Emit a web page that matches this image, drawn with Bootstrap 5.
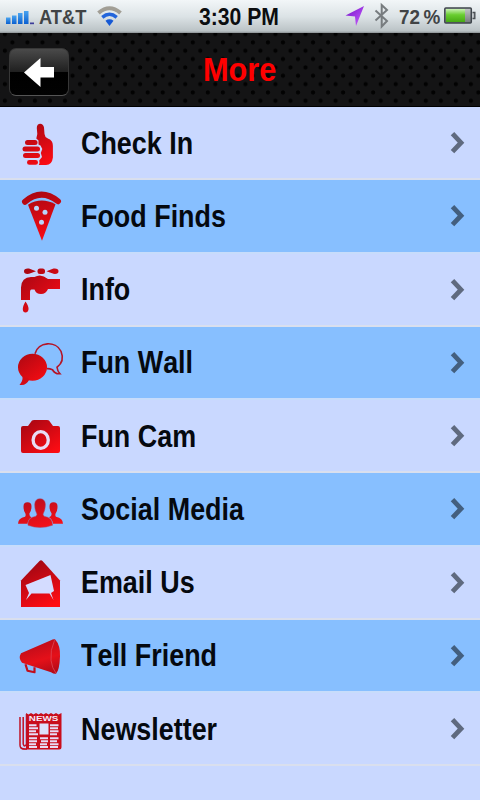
<!DOCTYPE html>
<html lang="en">
<head>
<meta charset="utf-8">
<meta name="viewport" content="width=device-width, initial-scale=1">
<title>More</title>
<link href="https://cdn.jsdelivr.net/npm/bootstrap@5.3.0/dist/css/bootstrap.min.css" rel="stylesheet">
<style>
body{font-family:"Liberation Sans",Arial,sans-serif;background:#c9d8ff;height:800px;overflow:hidden;color:#05090f}
svg{display:block;flex:none}
.statusbar{height:33px;background:linear-gradient(#f2f6f8,#dce3e6 50%,#bbc3c6 94%,#8b9194);font-weight:700;color:#414446;position:relative}
.status-label{transform-origin:0 0;white-space:nowrap;line-height:24px;font-size:21px}
.carrier{position:absolute;left:39px;top:5px;transform:scaleX(.87)}
.clock{position:absolute;left:199px;top:5px;font-size:23px;transform:scaleX(.92);color:#0b0d0f}
.charge{position:absolute;left:399px;top:5px;transform:scaleX(.9)}
.titlebar{height:74px;background-color:#141415;border-bottom:1px solid #000;
background-image:radial-gradient(circle,#020202 1.7px,transparent 2.5px),radial-gradient(circle,#020202 1.7px,transparent 2.5px);
background-size:15.04px 16.7px;background-position:4.9px 1px,12.4px -7.3px}
.back-btn{width:60px;height:48px;margin-left:9px;margin-top:4px;border-radius:7px;background:linear-gradient(#4a4a4a,#202020 49%,#000 51%,#020202);border:1px solid #373737;border-bottom-color:#555;padding:0}
.page-title{position:absolute;left:203px;top:17px;font-size:32.5px;line-height:40px;color:#ff0000;transform:scaleX(.945);transform-origin:0 0}
.menu-row{height:73.25px;background:#c9d8ff;border-bottom:2px solid #d9dfee;text-decoration:none;color:#05090f}
.menu-row:nth-child(even){background:#87bfff;border-bottom-color:#c7dcfb}
.menu-label{font-size:30.5px;font-weight:700;line-height:40px;transform:scaleX(.882);transform-origin:0 0;margin-left:11px;white-space:nowrap;font-kerning:none}
.chev{opacity:.57}
</style>
<script src="https://cdn.jsdelivr.net/npm/bootstrap@5.3.0/dist/js/bootstrap.bundle.min.js"></script>
</head>
<body>
<header>
<div class="statusbar">
<svg width="480" height="33" viewBox="0 0 480 33">
<defs>
<linearGradient id="sig" x1="0" y1="0" x2="0" y2="1"><stop stop-color="#49a4f0"/><stop offset="1" stop-color="#0a5fd0"/></linearGradient>
<linearGradient id="bat" x1="0" y1="0" x2="0" y2="1"><stop stop-color="#c9f2b4"/><stop offset=".45" stop-color="#69cd30"/><stop offset="1" stop-color="#46a913"/></linearGradient>
<linearGradient id="shell" x1="0" y1="0" x2="0" y2="1"><stop stop-color="#c4c7c9"/><stop offset="1" stop-color="#75797c"/></linearGradient>
<linearGradient id="loc" x1="0" y1="0" x2="1" y2="1"><stop stop-color="#7211c8"/><stop offset="1" stop-color="#cb60ff"/></linearGradient>
</defs>
<g fill="url(#sig)"><rect x="6" y="17.500" width="4.500" height="6.500"/><rect x="12" y="15.500" width="4.500" height="8.500"/><rect x="18" y="13" width="4.500" height="11"/><rect x="24" y="11" width="4.500" height="13"/></g><rect x="30" y="22.500" width="4" height="1.700" fill="#3c3c9a"/>
<g fill="none"><path d="M98.500 13Q109.500 3.500 120.500 13" stroke="#a19e95" stroke-width="4"/><path d="M102.300 17.300Q109.500 11.300 116.700 17.300" stroke="#2365db" stroke-width="3.500"/></g><path d="M105.500 20.700Q109.500 17.800 113.500 20.700L109.500 26Z" fill="#1659d4"/>
<path d="M364 6L345.500 15.500L355 16.500L356 26Z" fill="url(#loc)"/>
<path d="M375.500 10.500L387 21L381.700 26.500V5L387 10L375.500 20.500" fill="none" stroke="#777c7f" stroke-width="2"/>
<rect x="444.800" y="8" width="26.500" height="15" rx="1" fill="url(#shell)" stroke="#3e454b" stroke-width="1.500"/><rect x="446" y="9" width="19" height="13" fill="url(#bat)"/><path d="M472.500 12.500H474.800V18.500H472.500" fill="#b4b8bc" stroke="#4b5054" stroke-width="1.400"/>
</svg>
<span class="status-label carrier">AT&amp;T</span><span class="status-label clock">3:30 PM</span><span class="status-label charge">72<span class="ms-1">%</span></span>
</div>
<div class="titlebar position-relative d-flex align-items-center">
<button class="btn back-btn" aria-label="Back"><svg width="58" height="46" viewBox="10 49 58 46"><path d="M24 72.500L40.500 58V67H54V77.500H40.500V87Z" fill="#fff"/></svg></button>
<h1 class="page-title fw-bold m-0">More</h1>
</div>
</header>
<nav class="d-flex flex-column">
<a class="menu-row d-flex align-items-center" href="#"><svg width="70" height="71" viewBox="0 107 70 71"><defs><linearGradient id="red" gradientUnits="userSpaceOnUse" x1="24" y1="124" x2="48" y2="166"><stop stop-color="#a50713"/><stop offset="1" stop-color="#ff0c13"/></linearGradient></defs><g fill="url(#red)"><path d="M36.800 128C36.500 122.300 43.500 122.300 44 127.500L44.500 134Q44.800 137 47.500 138.300C51.500 140 52.900 142 52.900 146V157.500Q52 165 46 165H38.800Q40 163 39.200 160.500L42 157L40.800 153L42.300 149L40.500 145.500L38.500 144.500V140.500L36.300 138.500Q38 134 36.800 128Z"/><rect x="25" y="140" width="12.500" height="5" rx="2.500"/><rect x="22.500" y="146.500" width="17.500" height="5" rx="2.500"/><rect x="23" y="153" width="17" height="5" rx="2.500"/><rect x="27" y="160" width="11" height="4.800" rx="2.400"/></g></svg><span class="menu-label">Check In</span><svg class="chev ms-auto" width="30" height="71" viewBox="450 107 30 71"><path d="M452.500 133.700L461 142.700L452.500 151.700" fill="none" stroke="#101820" stroke-width="4.800"/></svg></a>
<a class="menu-row d-flex align-items-center" href="#"><svg width="70" height="71" viewBox="0 180.250 70 71"><defs><linearGradient id="red2" gradientUnits="userSpaceOnUse" x1="30" y1="192" x2="42" y2="240"><stop stop-color="#a90712"/><stop offset="1" stop-color="#f80b13"/></linearGradient></defs><path d="M25 202Q41 188 58 201.500" fill="none" stroke="url(#red2)" stroke-width="6" stroke-linecap="round"/><path d="M28 205Q41 197 55.500 204.500L42 241Z" fill="url(#red2)"/><g fill="#b9d4fa"><circle cx="36.500" cy="208.500" r="2.500"/><circle cx="45" cy="212.500" r="2.500"/><circle cx="41.500" cy="222.500" r="2.500"/></g></svg><span class="menu-label">Food Finds</span><svg class="chev ms-auto" width="30" height="71" viewBox="450 107 30 71"><path d="M452.500 133.700L461 142.700L452.500 151.700" fill="none" stroke="#101820" stroke-width="4.800"/></svg></a>
<a class="menu-row d-flex align-items-center" href="#"><svg width="70" height="71" viewBox="0 253.500 70 71"><defs><linearGradient id="red3" gradientUnits="userSpaceOnUse" x1="22" y1="270" x2="55" y2="304"><stop stop-color="#a50713"/><stop offset="1" stop-color="#f00b15"/></linearGradient></defs><g fill="url(#red3)"><path d="M21 299.500V287Q21.500 276.500 31 276.500H34.500Q41 272.500 48 278.500H60V288.500H48Q46 293.500 41 293.500T34.500 289H31.500Q30 289 30 292V299.500Z"/><rect x="37.500" y="268" width="7.500" height="5.400" rx="2.500"/><path d="M36 270.700L29 268Q24 267.500 24 270.700T29 273.300ZM46.500 270.700L53.500 268Q58.500 267.500 58.500 270.700T53.500 273.300Z"/><path d="M25.500 301Q29 306 28.500 309Q28 312 25.500 312T22.800 309Q22.500 306 25.500 301Z"/></g></svg><span class="menu-label">Info</span><svg class="chev ms-auto" width="30" height="71" viewBox="450 107 30 71"><path d="M452.500 133.700L461 142.700L452.500 151.700" fill="none" stroke="#101820" stroke-width="4.800"/></svg></a>
<a class="menu-row d-flex align-items-center" href="#"><svg width="70" height="71" viewBox="0 326.750 70 71"><defs><linearGradient id="red4" gradientUnits="userSpaceOnUse" x1="20" y1="346" x2="47" y2="382"><stop stop-color="#a30812"/><stop offset="1" stop-color="#fc0c13"/></linearGradient></defs><path d="M35 353.500C38 341 56 340.500 61 351Q65 361 57 367Q57.500 371 60 373.500Q55 374 52.500 369.500Q49 368 46.500 368.500" fill="none" stroke="#b51426" stroke-width="1.600"/><ellipse cx="32.500" cy="367" rx="14.500" ry="13.500" fill="url(#red4)"/><path d="M22.500 376Q23 381 19.500 384.500Q26 386 29.500 379Z" fill="#d40b15"/></svg><span class="menu-label">Fun Wall</span><svg class="chev ms-auto" width="30" height="71" viewBox="450 107 30 71"><path d="M452.500 133.700L461 142.700L452.500 151.700" fill="none" stroke="#101820" stroke-width="4.800"/></svg></a>
<a class="menu-row d-flex align-items-center" href="#"><svg width="70" height="71" viewBox="0 400 70 71"><defs><linearGradient id="red5" gradientUnits="userSpaceOnUse" x1="27" y1="420" x2="52" y2="455"><stop stop-color="#a80713"/><stop offset="1" stop-color="#fd0c13"/></linearGradient></defs><path d="M23 426H28L32 420.500Q33 420 34 420H47Q48.500 420 49 420.500L53 426H58Q60 426 60 428V451Q60 453 58 453H23Q21 453 21 451V428Q21 426 23 426Z" fill="url(#red5)"/><ellipse cx="40.700" cy="440" rx="7.600" ry="8.400" fill="none" stroke="#e8dcf4" stroke-width="3.300"/></svg><span class="menu-label">Fun Cam</span><svg class="chev ms-auto" width="30" height="71" viewBox="450 107 30 71"><path d="M452.500 133.700L461 142.700L452.500 151.700" fill="none" stroke="#101820" stroke-width="4.800"/></svg></a>
<a class="menu-row d-flex align-items-center" href="#"><svg width="70" height="71" viewBox="0 473.250 70 71"><defs><linearGradient id="red6" gradientUnits="userSpaceOnUse" x1="35" y1="499" x2="43" y2="528"><stop stop-color="#bd0d1c"/><stop offset="1" stop-color="#f51119"/></linearGradient></defs><g fill="url(#red6)"><path d="M18 524Q18 518.500 25 517Q26 516 25.500 514Q23.500 512 23.500 506.500Q23.500 502.500 27.500 502.500T31.500 506.500Q31.500 511 29.500 513.500Q29 517 31.500 517.500Q28 519.500 27.500 524Z"/><path d="M63 524Q63 518.500 56 517Q55 516 55.500 514Q57.500 512 57.500 506.500Q57.500 502.500 53.500 502.500T49.500 506.500Q49.500 511 51.500 513.500Q52 517 49 517.500Q52.500 519.500 53 524Z"/><path d="M28 525.500Q27 518 36 516.500L37 514.500Q34.500 510 34.700 504.500Q35 499 40 499T45.400 504.500Q45.500 510 43 514.500L44 516.500Q53 518 52.500 525.500Q40 530 28 525.500Z" stroke="#a94b6d" stroke-width=".5"/></g></svg><span class="menu-label">Social Media</span><svg class="chev ms-auto" width="30" height="71" viewBox="450 107 30 71"><path d="M452.500 133.700L461 142.700L452.500 151.700" fill="none" stroke="#101820" stroke-width="4.800"/></svg></a>
<a class="menu-row d-flex align-items-center" href="#"><svg width="70" height="71" viewBox="0 546.500 70 71"><defs><linearGradient id="red7" gradientUnits="userSpaceOnUse" x1="30" y1="564" x2="50" y2="606"><stop stop-color="#a30713"/><stop offset="1" stop-color="#ff0c13"/></linearGradient></defs><path d="M21 580L39.500 560.500Q41 559 42.500 560.500L60 580V606.500H21Z" fill="url(#red7)"/><path d="M25.500 584.500L50.500 574.500L54 590.500L51 592.500L53.500 599.500L49.500 593H31.500L26 599.500L29 592.500Z" fill="#d4dcff"/></svg><span class="menu-label">Email Us</span><svg class="chev ms-auto" width="30" height="71" viewBox="450 107 30 71"><path d="M452.500 133.700L461 142.700L452.500 151.700" fill="none" stroke="#101820" stroke-width="4.800"/></svg></a>
<a class="menu-row d-flex align-items-center" href="#"><svg width="70" height="71" viewBox="0 619.750 70 71"><defs><linearGradient id="red8" gradientUnits="userSpaceOnUse" x1="35" y1="640" x2="45" y2="673"><stop stop-color="#b80c1a"/><stop offset=".6" stop-color="#e51019"/><stop offset="1" stop-color="#b80b18"/></linearGradient></defs><path d="M25.500 664L27.500 670.500L34.500 672V667" fill="none" stroke="#c20d1b" stroke-width="2.200" stroke-linejoin="round"/><path d="M21 653L51 640Q53 638.500 55 639Q60.500 645 60 656Q59.500 670 56 673.500Q54 674 51 672L22 662.500Q18 658 21 653Z" fill="url(#red8)"/><path d="M54.500 640Q50 650 51 660Q52 668 56 673" fill="none" stroke="#dc5061" stroke-width=".7"/></svg><span class="menu-label">Tell Friend</span><svg class="chev ms-auto" width="30" height="71" viewBox="450 107 30 71"><path d="M452.500 133.700L461 142.700L452.500 151.700" fill="none" stroke="#101820" stroke-width="4.800"/></svg></a>
<a class="menu-row d-flex align-items-center" href="#"><svg width="70" height="71" viewBox="0 693 70 71"><path d="M26 713L28.500 714.500L31 713L33.500 714.500L36 713L38.500 714.500L41 713L43.500 714.500L46 713L48.500 714.500L51 713L53.500 714.500L56 713L58.500 714.500L61.500 713V747Q61.500 749.500 59 749.500H24Q20 749.500 20 746V717" fill="#c90d1c"/><path d="M19.300 713H26V749L20 747Z" fill="#c9d8ff"/><path d="M20 717V745Q20 749 24 749H27M23.200 717V744Q24.500 748 26.500 744V714" fill="none" stroke="#c01025" stroke-width="1.500"/><text x="28.800" y="721.300" font-size="6.700" font-weight="700" textLength="29.500" lengthAdjust="spacingAndGlyphs" fill="#f5e8f5">NEWS</text><rect x="39.500" y="723.500" width="9" height="11" fill="#dce0fb"/><path d="M29 725.300H36.500M29 728.300H38M29 731.300H36M29 734.300H38M29 738.300H37M29 741.300H37M29 744.300H36M29 747H37M50 725.300H58.500M50 728.300H58M50 731.300H58.500M50 734.300H57M50 738.300H58.500M50 741.300H57M50 744.300H58.500M50 747H58M40 738.300H48M41 741.300H48M40 744.300H47M40 747H48" stroke="#e7dcf5" stroke-width="1.900"/></svg><span class="menu-label">Newsletter</span><svg class="chev ms-auto" width="30" height="71" viewBox="450 107 30 71"><path d="M452.500 133.700L461 142.700L452.500 151.700" fill="none" stroke="#101820" stroke-width="4.800"/></svg></a>
</nav>
</body>
</html>
